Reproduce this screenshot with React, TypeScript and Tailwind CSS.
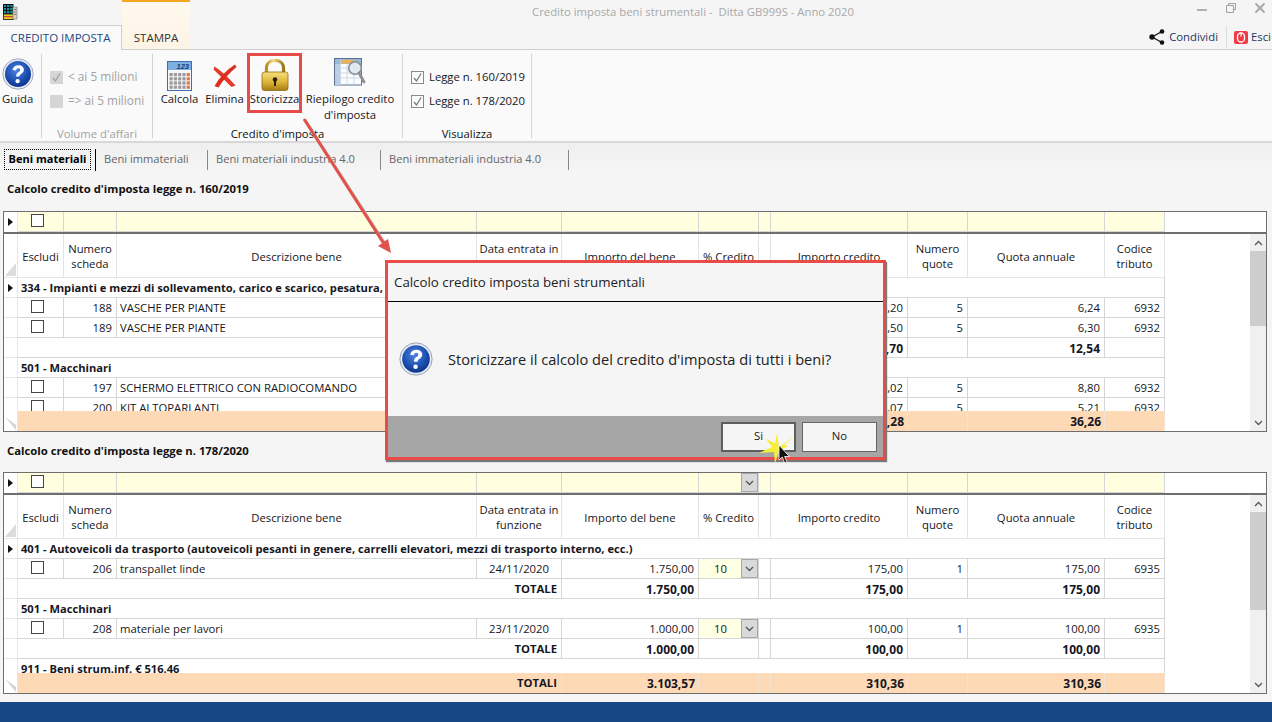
import React from "react";

const COLS = "grid grid-cols-[14px_46px_53px_360px_85px_137px_60px_12px_137px_60px_137px_60px] w-[1161px]";
const LINE = "border-r border-b border-[#d6d6d6]";

function HelpIcon({ size, id }: { size: number; id: string }) {
  return (
    <svg width={size} height={size} viewBox="0 0 32 32">
      <defs>
        <radialGradient id={id} cx="45%" cy="35%" r="70%">
          <stop offset="0%" stopColor="#4f86e0" />
          <stop offset="60%" stopColor="#1d4fb0" />
          <stop offset="100%" stopColor="#0c2f80" />
        </radialGradient>
      </defs>
      <circle cx="16" cy="16" r="15.2" fill="#e6ebf5" stroke="#8a97b0" strokeWidth="0.8" />
      <circle cx="16" cy="16" r="13" fill={`url(#${id})`} />
      <path d="M10.5 12c.6-3.2 3-4.8 5.8-4.8 3.4 0 5.6 2 5.6 4.6 0 2.2-1.4 3.2-2.8 4.2-1.1.8-1.6 1.3-1.6 2.6h-3.4c0-2.4.8-3.4 2.2-4.4 1-.7 1.9-1.3 1.9-2.3 0-1-.8-1.7-1.9-1.7-1.2 0-2 .7-2.4 2.2z" fill="#fff" />
      <circle cx="15.6" cy="23.2" r="2.1" fill="#fff" />
    </svg>
  );
}

function CalendarIcon() {
  const cells: React.ReactNode[] = [];
  for (let r = 0; r < 4; r++) {
    for (let c = 0; c < 5; c++) {
      cells.push(<rect key={`${r}-${c}`} x={2.5 + c * 4.3} y={12 + r * 4.2} width="3.2" height="3.2" fill={c === 4 ? "#d9794a" : "#9a9a9a"} />);
    }
  }
  return (
    <svg width="25" height="30" viewBox="0 0 25 30">
      <rect x="0.5" y="0.5" width="24" height="29" fill="#f6f8fc" stroke="#3d6ea8" />
      <rect x="1" y="1" width="23" height="8" fill="#7fb0e4" />
      <text x="22" y="8" textAnchor="end" fontSize="7.5" fontStyle="italic" fontWeight="700" fill="#1c3d70" fontFamily="Liberation Sans, sans-serif">123</text>
      {cells}
    </svg>
  );
}

function CrossIcon() {
  return (
    <svg width="24" height="24" viewBox="0 0 24 24">
      <path d="M1.500 2.500 Q11 8.500 22.500 21.500 L18.500 23 Q9 13.500 0.500 5.500z" fill="#e23a2b" />
      <path d="M22 0.500 L23.500 3 Q13.500 11 5.500 23.500 L1.500 22 Q9.500 8.500 22 0.500z" fill="#d92d20" />
    </svg>
  );
}

function LockIcon() {
  return (
    <svg width="28" height="32" viewBox="0 0 28 32">
      <defs>
        <linearGradient id="lockBody" x1="0" y1="0" x2="0" y2="1">
          <stop offset="0%" stopColor="#f7de7c" />
          <stop offset="55%" stopColor="#dcb437" />
          <stop offset="100%" stopColor="#a67c14" />
        </linearGradient>
        <linearGradient id="lockBow" x1="0" y1="0" x2="1" y2="0">
          <stop offset="0%" stopColor="#b98d22" />
          <stop offset="40%" stopColor="#f5dd85" />
          <stop offset="100%" stopColor="#9a7414" />
        </linearGradient>
      </defs>
      <path d="M5.500 14V9.500C5.500 4.500 9 1.500 14 1.500s8.500 3 8.500 8V14" fill="none" stroke="url(#lockBow)" strokeWidth="3.200" />
      <rect x="1" y="13" width="26" height="18.500" rx="2.500" fill="url(#lockBody)" stroke="#8d6a12" strokeWidth="0.800" />
      <circle cx="14" cy="20.500" r="2.300" fill="#2a1f08" />
      <rect x="13" y="21" width="2" height="6" fill="#2a1f08" />
    </svg>
  );
}

function TableLensIcon() {
  return (
    <svg width="32" height="28" viewBox="0 0 32 28">
      <rect x="0.500" y="0.500" width="27" height="26.500" fill="#fbfcfe" stroke="#5b6f8f" />
      <rect x="1" y="1" width="5" height="26" fill="#b9cde6" />
      <rect x="1" y="1" width="26" height="5" fill="#9db7d8" />
      <rect x="7" y="2" width="13" height="3.500" fill="#f2b24a" />
      <path d="M1 10h26M1 15h26M1 20h26M6.500 1v26M13 6v21M20 6v21" stroke="#c5d2e3" strokeWidth="0.800" />
      <circle cx="21" cy="10" r="6.300" fill="#dfe8ef" fillOpacity="0.900" stroke="#8d959e" strokeWidth="1.800" />
      <path d="M25 15l5 9" stroke="#8a8f96" strokeWidth="2.800" strokeLinecap="round" />
    </svg>
  );
}

function AppLogo() {
  return (
    <svg width="16" height="16" viewBox="0 0 16 16">
      <rect x="0.500" y="0.500" width="9.500" height="9.500" fill="#0e9aa0" stroke="#111" />
      <path d="M0.500 3.500h9.500M0.500 6.500h9.500M3.500 0.500v9.500M6.800 0.500v9.500" stroke="#111" strokeWidth="1" />
      <rect x="0.500" y="10" width="10" height="5.500" fill="#e8d030" stroke="#111" strokeWidth="0.800" />
      <path d="M1 12.700h9" stroke="#c8402a" strokeWidth="1.200" />
      <rect x="10" y="3" width="4" height="12" fill="#d8d4c8" stroke="#777" strokeWidth="0.600" />
      <path d="M11 5.500h2.500M11 8h2.500M11 10.500h2.500" stroke="#777" />
    </svg>
  );
}

function ShareIcon() {
  return (
    <svg width="16" height="16" viewBox="0 0 16 16">
      <path d="M13 2.500 3 8l10 5.500" fill="none" stroke="#111" strokeWidth="1.300" />
      <circle cx="13" cy="2.500" r="2.300" fill="#111" />
      <circle cx="3" cy="8" r="2.700" fill="#111" />
      <circle cx="13" cy="13.500" r="2.300" fill="#111" />
    </svg>
  );
}

function ExitIcon() {
  return (
    <svg width="14" height="13" viewBox="0 0 14 13">
      <rect x="0" y="0" width="14" height="13" rx="2" fill="#ee3b46" />
      <rect x="3.500" y="2" width="7" height="9" rx="3.500" fill="none" stroke="#fff" strokeWidth="1.300" />
      <path d="M7 1.500v4" stroke="#fff" strokeWidth="1.200" />
    </svg>
  );
}

function Chevron({ up }: { up?: boolean }) {
  return (
    <svg width="9" height="6" viewBox="0 0 9 6">
      <path d={up ? "M1 5 4.500 1.500 8 5" : "M1 1 4.500 4.500 8 1"} fill="none" stroke="#555" strokeWidth="1.300" />
    </svg>
  );
}

function Tick() {
  return (
    <svg width="13" height="13" viewBox="0 0 13 13">
      <rect x="0.500" y="0.500" width="12" height="12" fill="#fbfbfb" stroke="#8a8a8a" />
      <path d="M3 7l2.500 3L10 2.500" fill="none" stroke="#777" strokeWidth="1.200" />
    </svg>
  );
}

function DisabledCheck({ checked }: { checked?: boolean }) {
  return (
    <div className="w-[13px] h-[13px] bg-[#d6d6d6] flex items-center justify-center shrink-0">
      {checked && (
        <svg width="11" height="11" viewBox="0 0 11 11">
          <path d="M2 6l2.500 3L9 1.500" fill="none" stroke="#a0a0a0" strokeWidth="1.300" />
        </svg>
      )}
    </div>
  );
}

function RibbonButton({ icon, label, className }: { icon: React.ReactNode; label: React.ReactNode; className?: string }) {
  return (
    <div className={`flex flex-col items-center shrink-0 ${className ?? ""}`}>
      <div className="h-[37px] flex items-end justify-center">{icon}</div>
      <div className="text-center leading-[16px] whitespace-nowrap">{label}</div>
    </div>
  );
}

function Box() {
  return <div className="w-[13px] h-[13px] border border-[#444] bg-white ml-[13px] mt-[2px]" />;
}

function Arrowhead() {
  return (
    <svg width="6" height="8" viewBox="0 0 6 8">
      <path d="M0 0l5 4-5 4z" fill="#111" />
    </svg>
  );
}

function Combo() {
  return (
    <div className="absolute right-0 top-0 bottom-0 w-[17px] bg-[#d9d9d9] border border-[#a8a8a8] flex items-center justify-center">
      <Chevron />
    </div>
  );
}

type Row =
  | { t: "g"; text: string; mark?: boolean }
  | { t: "i"; n: string; d: string; date: string; imp: string; pct: string; cr: string; q: string; ann: string; cod: string }
  | { t: "s"; imp: string; cr: string; ann: string };

const numCell = `${LINE} flex items-center justify-end pr-[4px] pt-[2px] overflow-hidden whitespace-nowrap`;
const boldNum = "font-bold text-[12px]";

function DataRow({ r }: { r: Row }) {
  if (r.t === "g") {
    return (
      <div className={`${COLS} h-[20px] shrink-0`}>
        <div className="border-r border-b border-[#e6e6e6] flex items-center justify-center">{r.mark && <Arrowhead />}</div>
        <div className={`col-span-11 ${LINE} font-bold text-[11.150px] flex items-center pl-[3px] pt-[2px] whitespace-nowrap overflow-hidden`}>{r.text}</div>
      </div>
    );
  }
  if (r.t === "s") {
    return (
      <div className={`${COLS} h-[20px] shrink-0`}>
        <div className="border-r border-b border-[#e6e6e6]" />
        <div className="col-span-4 border-b border-r border-[#d6d6d6] font-bold flex items-center justify-end pr-[4px] pt-[2px]">TOTALE</div>
        <div className={`${numCell} ${boldNum}`}>{r.imp}</div>
        <div className={LINE} />
        <div className={LINE} />
        <div className={`${numCell} ${boldNum}`}>{r.cr}</div>
        <div className={LINE} />
        <div className={`${numCell} ${boldNum}`}>{r.ann}</div>
        <div className={LINE} />
      </div>
    );
  }
  return (
    <div className={`${COLS} h-[20px] shrink-0`}>
      <div className="border-r border-b border-[#e6e6e6]" />
      <div className={LINE}><Box /></div>
      <div className={numCell}>{r.n}</div>
      <div className={`${LINE} flex items-center pl-[3px] pt-[2px] whitespace-nowrap overflow-hidden`}>{r.d}</div>
      <div className={`${LINE} flex items-center justify-center pt-[2px]`}>{r.date}</div>
      <div className={numCell}>{r.imp}</div>
      <div className={`${LINE} relative bg-[#ffffe3] flex items-center pl-[15px] pt-[2px]`}>{r.pct}<Combo /></div>
      <div className={LINE} />
      <div className={numCell}>{r.cr}</div>
      <div className={numCell}>{r.q}</div>
      <div className={numCell}>{r.ann}</div>
      <div className={numCell}>{r.cod}</div>
    </div>
  );
}

function HeaderCell({ children, className }: { children?: React.ReactNode; className?: string }) {
  return <div className={`border-r border-b border-[#e4e4e4] flex items-center justify-center text-center leading-[15px] ${className ?? ""}`}>{children}</div>;
}

function GridPanel({ rows, bodyH, combo, totals, thumbH }: { rows: Row[]; bodyH: string; combo?: boolean; totals: { imp: string; cr: string; ann: string }; thumbH: string }) {
  const ft = "border-r border-[#f1e4d6] flex items-center justify-end pr-[3px] pt-[1px] font-bold";
  return (
    <div className="border border-[#6e6e6e] bg-white shrink-0">
      <div className="h-[20px] flex">
        <div className={`${COLS} h-[20px]`}>
          <div className="flex items-center justify-center border-r border-[#e6e6e6]"><Arrowhead /></div>
          <div className={`bg-[#ffffdf] ${LINE}`}><Box /></div>
          {[0, 1, 2, 3].map((i) => <div key={i} className={`bg-[#ffffdf] ${LINE}`} />)}
          <div className={`bg-[#ffffdf] ${LINE} relative`}>{combo && <Combo />}</div>
          {[4, 5, 6, 7, 8].map((i) => <div key={i} className={`bg-[#ffffdf] ${LINE}`} />)}
        </div>
      </div>
      <div className="h-[2px] bg-[#6e6e6e]" />
      <div className="flex">
        <div className="flex-1 min-w-0 flex flex-col">
          <div className={`${COLS} h-[44px]`}>
            <div className="border-r border-b border-[#e6e6e6] flex items-end">
              <svg width="13" height="16" viewBox="0 0 13 16"><path d="M12 2v13H1z" fill="#dcdcdc" /></svg>
            </div>
            <HeaderCell className="pt-[2px]">Escludi</HeaderCell>
            <HeaderCell>Numero<br />scheda</HeaderCell>
            <HeaderCell className="pt-[2px]">Descrizione bene</HeaderCell>
            <HeaderCell>Data entrata in<br />funzione</HeaderCell>
            <HeaderCell className="pt-[2px]">Importo del bene</HeaderCell>
            <HeaderCell className="pt-[2px]">% Credito</HeaderCell>
            <HeaderCell />
            <HeaderCell className="pt-[2px]">Importo credito</HeaderCell>
            <HeaderCell>Numero<br />quote</HeaderCell>
            <HeaderCell className="pt-[2px]">Quota annuale</HeaderCell>
            <HeaderCell>Codice<br />tributo</HeaderCell>
          </div>
          <div className={`${bodyH} overflow-hidden flex flex-col`}>
            {rows.map((r, i) => <DataRow key={i} r={r} />)}
          </div>
          <div className={`${COLS} h-[20px]`}>
            <div className="border-r border-[#e6e6e6] flex items-end">
              <svg width="13" height="16" viewBox="0 0 13 16"><path d="M1 2l11 8v5z" fill="#d4d4d4" /></svg>
            </div>
            <div className={`col-span-4 bg-[#fdd9b6] ${ft} pr-[4px]`}>TOTALI</div>
            <div className={`bg-[#fdd9b6] ${ft} text-[12px]`}>{totals.imp}</div>
            <div className={`bg-[#fdd9b6] ${ft}`} />
            <div className={`bg-[#fdd9b6] ${ft}`} />
            <div className={`bg-[#fdd9b6] ${ft} text-[12px]`}>{totals.cr}</div>
            <div className={`bg-[#fdd9b6] ${ft}`} />
            <div className={`bg-[#fdd9b6] ${ft} text-[12px]`}>{totals.ann}</div>
            <div className={`bg-[#fdd9b6] ${ft}`} />
          </div>
        </div>
        <div className="w-[16px] bg-[#f0f0f0] flex flex-col items-center shrink-0">
          <div className="h-[17px] flex items-center justify-center"><Chevron up /></div>
          <div className={`w-full ${thumbH} bg-[#cdcdcd]`} />
          <div className="flex-1" />
          <div className="h-[17px] flex items-center justify-center"><Chevron /></div>
        </div>
      </div>
    </div>
  );
}

const rows1: Row[] = [
  { t: "g", text: "334 - Impianti e mezzi di sollevamento, carico e scarico, pesatura, ecc.", mark: true },
  { t: "i", n: "188", d: "VASCHE PER PIANTE", date: "15/09/2020", imp: "312,00", pct: "10", cr: "31,20", q: "5", ann: "6,24", cod: "6932" },
  { t: "i", n: "189", d: "VASCHE PER PIANTE", date: "15/09/2020", imp: "315,00", pct: "10", cr: "31,50", q: "5", ann: "6,30", cod: "6932" },
  { t: "s", imp: "627,00", cr: "62,70", ann: "12,54" },
  { t: "g", text: "501 - Macchinari" },
  { t: "i", n: "197", d: "SCHERMO ELETTRICO CON RADIOCOMANDO", date: "20/10/2020", imp: "440,20", pct: "10", cr: "44,02", q: "5", ann: "8,80", cod: "6932" },
  { t: "i", n: "200", d: "KIT ALTOPARLANTI", date: "20/10/2020", imp: "260,70", pct: "10", cr: "26,07", q: "5", ann: "5,21", cod: "6932" },
];

const rows2: Row[] = [
  { t: "g", text: "401 - Autoveicoli da trasporto (autoveicoli pesanti in genere, carrelli elevatori, mezzi di trasporto interno, ecc.)", mark: true },
  { t: "i", n: "206", d: "transpallet linde", date: "24/11/2020", imp: "1.750,00", pct: "10", cr: "175,00", q: "1", ann: "175,00", cod: "6935" },
  { t: "s", imp: "1.750,00", cr: "175,00", ann: "175,00" },
  { t: "g", text: "501 - Macchinari" },
  { t: "i", n: "208", d: "materiale per lavori", date: "23/11/2020", imp: "1.000,00", pct: "10", cr: "100,00", q: "1", ann: "100,00", cod: "6935" },
  { t: "s", imp: "1.000,00", cr: "100,00", ann: "100,00" },
  { t: "g", text: "911 - Beni strum.inf. € 516.46" },
];

function Dialog() {
  return (
    <div className="absolute left-[385px] top-[260px] w-[501px] h-[200px] border-[3px] border-[#e84b48] bg-[#f5f5f5] flex flex-col shadow-[1px_2px_1px_#777]">
      <div className="h-[39px] border-b border-black flex items-center pl-[6px] pt-[2px] text-[13.300px] text-[#222] shrink-0">Calcolo credito imposta beni strumentali</div>
      <div className="flex-1 flex items-center pl-[11px] gap-[15px]">
        <HelpIcon size={34} id="helpDlg" />
        <span className="text-[14.600px] text-[#222] whitespace-nowrap pt-[2px]">Storicizzare il calcolo del credito d'imposta di tutti i beni?</span>
      </div>
      <div className="h-[41px] bg-[#a6a6a6] flex items-center justify-end gap-[6px] pr-[6px] shrink-0">
        <div className="w-[75px] h-[30px] border-2 border-[#5e5e5e] bg-[#f5f5f5] flex items-center justify-center">Si</div>
        <div className="w-[75px] h-[30px] border border-[#666] bg-[#f5f5f5] flex items-center justify-center">No</div>
      </div>
    </div>
  );
}

export default function App() {
  return (
    <div className="relative w-[1272px] h-[722px] overflow-hidden bg-[#f5f5f5] flex flex-col font-['Open_Sans',sans-serif] text-[11.300px] text-[#161622]">
      <div className="h-[25px] flex items-start relative shrink-0">
        <div className="pl-[3px] pt-[4px]"><AppLogo /></div>
        <div className="absolute left-[532px] top-[2px] w-[322px] h-[20px] text-center text-[#a8a8a8] whitespace-nowrap flex items-center justify-center">Credito imposta beni strumentali -&nbsp; Ditta GB999S - Anno 2020</div>
        <div className="ml-auto flex items-center gap-[19px] pr-[7px] pt-[3px]">
          <div className="w-[10px] h-[2px] bg-[#b0b0b0] mt-[4px]" />
          <svg width="10" height="10" viewBox="0 0 10 10"><path d="M2.500 2.500v-2h7v6h-2M.5 2.500h7v7h-7z" fill="none" stroke="#a0a0a0" /></svg>
          <svg width="10" height="10" viewBox="0 0 10 10"><path d="M.5.500l9 9M9.500.500l-9 9" stroke="#a8a8a8" strokeWidth="2" /></svg>
        </div>
      </div>

      <div className="h-[25px] flex border-b border-[#cfcfcf] shrink-0">
        <div className="w-[122px] h-[25px] bg-[#fafafa] border-t border-r border-[#cfcfcf] flex items-center justify-center text-[#23487f] text-[11.500px]">CREDITO IMPOSTA</div>
        <div className="w-[68px] h-[49px] -mt-[25px] border-t-2 border-[#f5a623] bg-gradient-to-b from-[#fff8ee] to-[#fdf4e7] flex items-end justify-center pb-[3px] text-[#333] text-[11.500px]">STAMPA</div>
        <div className="ml-auto flex items-center">
          <div className="flex items-center gap-[4px] pr-[8px] border-r border-[#dcdcdc] h-[22px] mr-[7px] text-[#1d3560]"><ShareIcon /><span>Condividi</span></div>
          <div className="flex items-center gap-[3px] w-[38px]"><ExitIcon /><span className="text-[#1d3560]">Esci</span></div>
        </div>
      </div>

      <div className="h-[93px] bg-[#fafafa] border-b-2 border-[#d8d8d8] flex pt-[4px] shrink-0">
        <div className="w-[42px] h-[84px] border-r border-[#d4d4d4] flex flex-col items-start pl-[2px] pt-[4px] shrink-0">
          <HelpIcon size={32} id="helpGuida" />
          <div className="leading-[16px] mt-[1px]">Guida</div>
        </div>
        <div className="w-[111px] h-[84px] border-r border-[#d4d4d4] flex flex-col shrink-0 text-[#a2a2a2]">
          <div className="flex items-center gap-[5px] pl-[8px] mt-[15px] h-[16px] text-[11.800px]"><DisabledCheck checked />&lt; ai 5 milioni</div>
          <div className="flex items-center gap-[5px] pl-[8px] mt-[8px] h-[16px] text-[11.800px]"><DisabledCheck />=&gt; ai 5 milioni</div>
          <div className="mt-auto text-center leading-[16px] mb-[-4px]">Volume d'affari</div>
        </div>
        <div className="w-[250px] h-[84px] border-r border-[#d4d4d4] flex flex-col shrink-0">
          <div className="flex items-start pl-[7px]">
            <RibbonButton className="w-[39px]" icon={<CalendarIcon />} label="Calcola" />
            <RibbonButton className="w-[39px] ml-[6px]" icon={<div className="pb-[3px]"><CrossIcon /></div>} label="Elimina" />
            <div className="relative ml-[6px]">
              <RibbonButton className="w-[49px]" icon={<LockIcon />} label="Storicizza" />
              <div className="absolute -left-[3px] -top-[1px] w-[55px] h-[60px] border-[3px] border-[#e84b48]" />
            </div>
            <RibbonButton className="w-[90px] ml-[6px]" icon={<div className="pb-[5px]"><TableLensIcon /></div>} label={<>Riepilogo credito<br />d'imposta</>} />
          </div>
          <div className="mt-auto text-center leading-[16px] mb-[-4px] text-[#111]">Credito d'imposta</div>
        </div>
        <div className="w-[129px] h-[84px] border-r border-[#d4d4d4] flex flex-col shrink-0">
          <div className="flex items-center gap-[5px] pl-[8px] mt-[15px] h-[16px]"><Tick />Legge n. 160/2019</div>
          <div className="flex items-center gap-[5px] pl-[8px] mt-[8px] h-[16px]"><Tick />Legge n. 178/2020</div>
          <div className="mt-auto text-center leading-[16px] mb-[-4px] text-[#111]">Visualizza</div>
        </div>
      </div>

      <div className="h-[33px] bg-gradient-to-b from-[#efefef] to-[#f6f6f6] flex items-center pl-[5px] text-[#666] text-[11.100px] shrink-0">
        <div className="w-[85px] h-[19px] outline-1 outline-dotted outline-black flex items-center justify-center font-bold text-[#000] text-[11px]">Beni materiali</div>
        <div className="w-px h-[22px] bg-black ml-[5px]" />
        <div className="w-[111px] pl-[8px] whitespace-nowrap">Beni immateriali</div>
        <div className="w-px h-[20px] bg-[#888]" />
        <div className="w-[172px] pl-[8px] whitespace-nowrap">Beni materiali industria 4.0</div>
        <div className="w-px h-[20px] bg-[#888]" />
        <div className="w-[187px] pl-[8px] whitespace-nowrap">Beni immateriali industria 4.0</div>
        <div className="w-px h-[20px] bg-[#888]" />
      </div>

      <div className="flex-1 flex flex-col pl-[3px] pr-[5px] min-h-0">
        <div className="h-[35px] pt-[5px] pl-[4px] font-bold leading-[16px] text-[#111] shrink-0">Calcolo credito d'imposta legge n. 160/2019</div>
        <GridPanel rows={rows1} bodyH="h-[133px]" totals={{ imp: "1.812,80", cr: "181,28", ann: "36,26" }} thumbH="h-[75px]" />
        <div className="h-[40px] pt-[11px] pl-[4px] font-bold leading-[16px] text-[#111] shrink-0">Calcolo credito d'imposta legge n. 178/2020</div>
        <GridPanel rows={rows2} bodyH="h-[134px]" combo totals={{ imp: "3.103,57", cr: "310,36", ann: "310,36" }} thumbH="h-[98px]" />
      </div>

      <div className="h-[20px] bg-[#174785] shrink-0" />

      <svg className="absolute left-0 top-0 pointer-events-none" width="400" height="262" viewBox="0 0 400 262">
        <path d="M304 119 388 249" stroke="#b9a9a9" strokeWidth="3" transform="translate(1 1)" />
        <path d="M304 119 386 247" stroke="#e2524d" strokeWidth="3" />
        <path d="M391 253 378 246 388 239z" fill="#e2524d" />
      </svg>

      <Dialog />

      <svg className="absolute left-[757px] top-[430px] pointer-events-none" width="40" height="36" viewBox="0 0 40 36">
        <path d="M22 17 L38 6 L27 15 L31 16 L26 19 L28 30 L22 21 L18 34 L17 22 L2 23 L15 17 L9 9 L18 13 L20 3z" fill="#f5ef3a" />
        <path d="M22 15v15l3.300-3 2.400 6 2.300-1-2.400-5.500h4.700z" fill="#111" stroke="#fff" strokeWidth="0.800" />
      </svg>
    </div>
  );
}
